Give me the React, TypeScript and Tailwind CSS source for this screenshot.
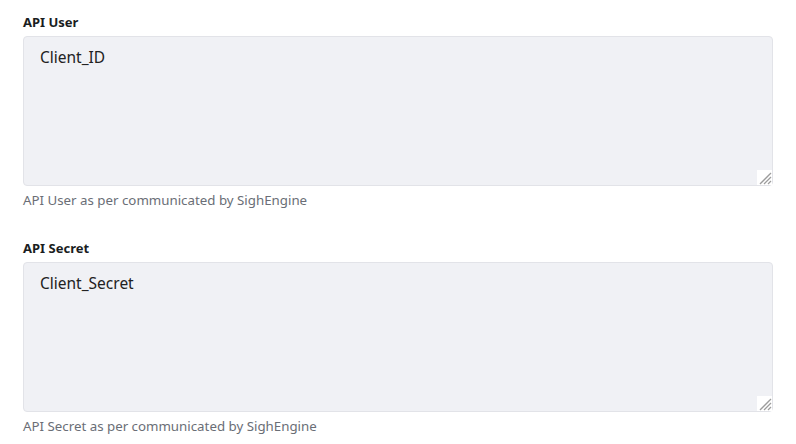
import React from "react";

function Grip() {
  return (
    <svg
      className="absolute right-[1px] bottom-[1px] pointer-events-none"
      width="15"
      height="15"
      viewBox="0 0 15 15"
    >
      <rect x="0" y="0" width="15" height="15" fill="#ffffff" />
      <g stroke="#9c9c9c" strokeWidth="1.3">
        <line x1="14" y1="3" x2="3" y2="14" />
        <line x1="14" y1="7" x2="7" y2="14" />
        <line x1="14" y1="11" x2="11" y2="14" />
      </g>
    </svg>
  );
}

function Field({ label, value, help }: { label: string; value: string; help: string }) {
  return (
    <div className="flex flex-col">
      <label className="text-[13px] font-bold leading-[20px] text-[#1a1d21] mb-[4px]">{label}</label>
      <div className="relative w-[750px] h-[150px]">
        <textarea
          defaultValue={value}
          className="block w-full h-full rounded-[4px] border border-[#e2e3e8] bg-[#f0f1f5] px-[16px] pt-[9px] pb-[10px] text-[15.5px] leading-[22px] text-[#222] outline-none resize-none"
        />
        <Grip />
      </div>
      <div className="mt-[5px] text-[13.3px] leading-[18px] text-[#6a6e76]">{help}</div>
    </div>
  );
}

export default function App() {
  return (
    <div
      className="w-[796px] h-[444px] bg-white pl-[23px] pt-[12px] flex flex-col gap-[29px]"
      style={{ fontFamily: '"Noto Sans", "Open Sans", sans-serif' }}
    >
      <Field label="API User" value="Client_ID" help="API User as per communicated by SighEngine" />
      <Field label="API Secret" value="Client_Secret" help="API Secret as per communicated by SighEngine" />
    </div>
  );
}
